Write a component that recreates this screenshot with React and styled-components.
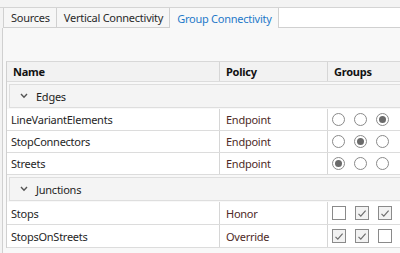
import styled, { createGlobalStyle } from "styled-components"

const GlobalStyle = createGlobalStyle`
    html, body {
        margin: 0;
        background: #f3f3f3;
        font-family: "Noto Sans", "Open Sans", sans-serif;
        font-size: 11px;
        letter-spacing: -0.25px;
        color: #262626;
        overflow: hidden;
    }
`

const Page = styled.div`
    height: 253px;
    display: flex;
    flex-direction: column;
    padding-top: 7px;
    box-sizing: border-box;
`

const TabStrip = styled.div`
    display: flex;
    height: 20px;
    border-top: 1px solid #d4d4d4;
    padding-left: 3px;
`

const Tab = styled.div`
    display: flex;
    align-items: center;
    padding: 0 6px 0 7px;
    border-right: 1px solid #d0d0d0;
    border-left: ${(p) => (p.$first ? "1px solid #d0d0d0" : "none")};
    border-bottom: ${(p) => (p.$active ? "none" : "1px solid #d0d0d0")};
    background: ${(p) => (p.$active ? "#f8f8f8" : "#f6f6f6")};
    color: ${(p) => (p.$active ? "#1f79c9" : "#2a2a2a")};
    white-space: nowrap;
`

const TabFiller = styled.div`
    flex: 1;
    background: #ffffff;
    border-bottom: 1px solid #d0d0d0;
`

const Panel = styled.div`
    flex: 1;
    margin-left: 2px;
    border-left: 1px solid #d0d0d0;
    background: #f8f8f8;
    padding: 33px 0 0 3px;
`

const Table = styled.div`
    border-left: 1px solid #d0d0d0;
    border-top: 1px solid #d8d8d8;
`

const Row = styled.div`
    display: grid;
    grid-template-columns: 212px 108px 1fr;
    height: ${(p) => p.$h || 21}px;
    background: ${(p) => (p.$header ? "#f2f2f2" : "#ffffff")};
    border-bottom: 1px solid #dcdcdc;
    font-weight: ${(p) => (p.$header ? 700 : 400)};
    color: ${(p) => (p.$header ? "#111" : "#262626")};
`

const Cell = styled.div`
    display: flex;
    align-items: center;
    padding-left: ${(p) => p.$pad ?? 6}px;
    border-left: ${(p) => (p.$divider ? "1px solid #d6d6d6" : "none")};
    color: ${(p) => p.$color || "inherit"};
    white-space: nowrap;
    overflow: hidden;
`

const GroupRow = styled.div`
    display: flex;
    align-items: center;
    gap: 8px;
    height: 22px;
    margin: 2px 0 1px 2px;
    padding-left: 10px;
    background: #f4f4f4;
    border: 1px solid #dedede;
    border-right: none;
    color: #1e1e1e;
`

const Chevron = styled.svg`
    width: 8px;
    height: 6px;
`

const Options = styled.div`
    display: flex;
    align-items: center;
    gap: 9px;
    padding-left: 4px;
`

const Radio = styled.span`
    width: 11px;
    height: 11px;
    border-radius: 50%;
    border: 1px solid #8a8a8a;
    background: #fff;
    display: flex;
    align-items: center;
    justify-content: center;
    &::after {
        content: "";
        width: 7px;
        height: 7px;
        border-radius: 50%;
        background: ${(p) => (p.$on ? "#6a6a6a" : "transparent")};
    }
`

const Check = styled.span`
    width: 12px;
    height: 12px;
    border: 1px solid #8a8a8a;
    background: ${(p) => (p.$on ? "#f2f2f2" : "#fff")};
    display: flex;
    align-items: center;
    justify-content: center;
`

const policyColor = "#4e2a26"

const edges = [
    { name: "LineVariantElements", policy: "Endpoint", pick: 2 },
    { name: "StopConnectors", policy: "Endpoint", pick: 1 },
    { name: "Streets", policy: "Endpoint", pick: 0 },
]

const junctions = [
    { name: "Stops", policy: "Honor", checks: [false, true, true] },
    { name: "StopsOnStreets", policy: "Override", checks: [true, true, false] },
]

const Tick = () => (
    <svg width="10" height="9" viewBox="0 0 10 9">
        <path d="M1.5 4.8 L3.8 7.2 L8.6 1.6" fill="none" stroke="#6e6e6e" strokeWidth="1.2" />
    </svg>
)

const Group = ({ label }) => (
    <GroupRow>
        <Chevron viewBox="0 0 8 6">
            <path d="M1 1 L4 4.2 L7 1" fill="none" stroke="#555" strokeWidth="1.4" />
        </Chevron>
        {label}
    </GroupRow>
)

export default function App() {
    return (
        <>
            <GlobalStyle />
            <Page>
                <TabStrip>
                    <Tab $first>Sources</Tab>
                    <Tab>Vertical Connectivity</Tab>
                    <Tab $active>Group Connectivity</Tab>
                    <TabFiller />
                </TabStrip>
                <Panel>
                    <Table>
                        <Row $header $h={19}>
                            <Cell $pad={6}>Name</Cell>
                            <Cell $divider>Policy</Cell>
                            <Cell $divider>Groups</Cell>
                        </Row>
                        <Group label="Edges" />
                        {edges.map((e) => (
                            <Row key={e.name}>
                                <Cell $pad={4}>{e.name}</Cell>
                                <Cell $divider $color={policyColor}>{e.policy}</Cell>
                                <Cell $divider $pad={0}>
                                    <Options>
                                        {[0, 1, 2].map((i) => (
                                            <Radio key={i} $on={i === e.pick} />
                                        ))}
                                    </Options>
                                </Cell>
                            </Row>
                        ))}
                        <Group label="Junctions" />
                        {junctions.map((j) => (
                            <Row key={j.name} $h={22}>
                                <Cell $pad={4}>{j.name}</Cell>
                                <Cell $divider $color={policyColor}>{j.policy}</Cell>
                                <Cell $divider $pad={0}>
                                    <Options>
                                        {j.checks.map((c, i) => (
                                            <Check key={i} $on={c}>{c && <Tick />}</Check>
                                        ))}
                                    </Options>
                                </Cell>
                            </Row>
                        ))}
                    </Table>
                </Panel>
            </Page>
        </>
    )
}
